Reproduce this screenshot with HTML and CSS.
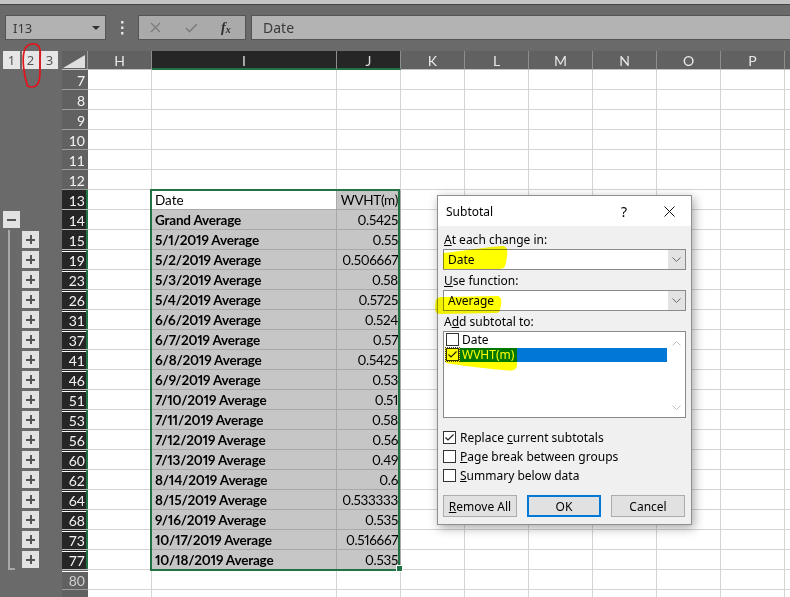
FILE: index.html
```html
<!DOCTYPE html>
<html lang="en">
<head>
<meta charset="utf-8">
<title>Subtotal</title>
<link rel="stylesheet" href="styles.css">
</head>
<body>
<div class="top"></div>
<div class="fbar">
  <div class="namebox"><span>I13</span><span class="caret"></span></div>
  <div class="dots"><svg width="3" height="14" viewBox="0 0 3 14"><rect x="0" y="0" width="2.5" height="2.5" fill="#e2e2e2"/><rect x="0" y="5.5" width="2.5" height="2.5" fill="#e2e2e2"/><rect x="0" y="11" width="2.5" height="2.5" fill="#e2e2e2"/></svg></div>
  <div class="fxbox">
    <svg class="ic-x" width="11" height="11" viewBox="0 0 11 11"><path d="M1 1L10 10M10 1L1 10" stroke="#7d7d7d" stroke-width="1.4"/></svg>
    <svg class="ic-ok" width="13" height="10" viewBox="0 0 13 10"><path d="M1 5L4.5 8.5L12 1" stroke="#7d7d7d" stroke-width="1.6" fill="none"/></svg>
    <span class="fx"><i>f</i><sub>x</sub></span>
  </div>
  <div class="input">Date</div>
</div>

<div class="hdr">
  <div class="lvl"><span class="lb">1</span><span class="lb">2</span><span class="lb">3</span></div>
  <div class="corner"><svg width="25" height="18" viewBox="0 0 25 18"><polygon points="1,17 23,17 23,4" fill="#dedede"/></svg></div>
  <div class="ch">H</div>
  <div class="ch on">I</div>
  <div class="ch on">J</div>
  <div class="ch">K</div>
  <div class="ch">L</div>
  <div class="ch">M</div>
  <div class="ch">N</div>
  <div class="ch">O</div>
  <div class="ch">P</div>
  <div class="ch end"></div>
</div>

<div class="grid">
  <div class="row"><div class="ol"></div><div class="rh">7</div><div class="c"></div><div class="c"></div><div class="c"></div><div class="c rest"></div></div>
  <div class="row"><div class="ol"></div><div class="rh">8</div><div class="c"></div><div class="c"></div><div class="c"></div><div class="c rest"></div></div>
  <div class="row"><div class="ol"></div><div class="rh">9</div><div class="c"></div><div class="c"></div><div class="c"></div><div class="c rest"></div></div>
  <div class="row"><div class="ol"></div><div class="rh">10</div><div class="c"></div><div class="c"></div><div class="c"></div><div class="c rest"></div></div>
  <div class="row"><div class="ol"></div><div class="rh">11</div><div class="c"></div><div class="c"></div><div class="c"></div><div class="c rest"></div></div>
  <div class="row"><div class="ol"></div><div class="rh">12</div><div class="c"></div><div class="c"></div><div class="c"></div><div class="c rest"></div></div>
  <div class="row"><div class="ol"></div><div class="rh sel">13</div><div class="c"></div><div class="c act">Date</div><div class="c s n">WVHT(m)</div><div class="c rest"></div></div>
  <div class="row"><div class="ol"><i class="ob minus"></i></div><div class="rh sel">14</div><div class="c"></div><div class="c s b">Grand Average</div><div class="c s n">0.5425</div><div class="c rest"></div></div>
  <div class="row"><div class="ol ln"><i class="ob plus"></i></div><div class="rh sel">15</div><div class="c"></div><div class="c s b">5/1/2019 Average</div><div class="c s n">0.55</div><div class="c rest"></div></div>
  <div class="row"><div class="ol ln"><i class="ob plus"></i></div><div class="rh sel gap">19</div><div class="c"></div><div class="c s b">5/2/2019 Average</div><div class="c s n">0.506667</div><div class="c rest"></div></div>
  <div class="row"><div class="ol ln"><i class="ob plus"></i></div><div class="rh sel gap">23</div><div class="c"></div><div class="c s b">5/3/2019 Average</div><div class="c s n">0.58</div><div class="c rest"></div></div>
  <div class="row"><div class="ol ln"><i class="ob plus"></i></div><div class="rh sel gap">26</div><div class="c"></div><div class="c s b">5/4/2019 Average</div><div class="c s n">0.5725</div><div class="c rest"></div></div>
  <div class="row"><div class="ol ln"><i class="ob plus"></i></div><div class="rh sel gap">31</div><div class="c"></div><div class="c s b">6/6/2019 Average</div><div class="c s n">0.524</div><div class="c rest"></div></div>
  <div class="row"><div class="ol ln"><i class="ob plus"></i></div><div class="rh sel gap">37</div><div class="c"></div><div class="c s b">6/7/2019 Average</div><div class="c s n">0.57</div><div class="c rest"></div></div>
  <div class="row"><div class="ol ln"><i class="ob plus"></i></div><div class="rh sel gap">41</div><div class="c"></div><div class="c s b">6/8/2019 Average</div><div class="c s n">0.5425</div><div class="c rest"></div></div>
  <div class="row"><div class="ol ln"><i class="ob plus"></i></div><div class="rh sel gap">46</div><div class="c"></div><div class="c s b">6/9/2019 Average</div><div class="c s n">0.53</div><div class="c rest"></div></div>
  <div class="row"><div class="ol ln"><i class="ob plus"></i></div><div class="rh sel gap">51</div><div class="c"></div><div class="c s b">7/10/2019 Average</div><div class="c s n">0.51</div><div class="c rest"></div></div>
  <div class="row"><div class="ol ln"><i class="ob plus"></i></div><div class="rh sel gap">53</div><div class="c"></div><div class="c s b">7/11/2019 Average</div><div class="c s n">0.58</div><div class="c rest"></div></div>
  <div class="row"><div class="ol ln"><i class="ob plus"></i></div><div class="rh sel gap">56</div><div class="c"></div><div class="c s b">7/12/2019 Average</div><div class="c s n">0.56</div><div class="c rest"></div></div>
  <div class="row"><div class="ol ln"><i class="ob plus"></i></div><div class="rh sel gap">60</div><div class="c"></div><div class="c s b">7/13/2019 Average</div><div class="c s n">0.49</div><div class="c rest"></div></div>
  <div class="row"><div class="ol ln"><i class="ob plus"></i></div><div class="rh sel gap">62</div><div class="c"></div><div class="c s b">8/14/2019 Average</div><div class="c s n">0.6</div><div class="c rest"></div></div>
  <div class="row"><div class="ol ln"><i class="ob plus"></i></div><div class="rh sel gap">64</div><div class="c"></div><div class="c s b">8/15/2019 Average</div><div class="c s n">0.533333</div><div class="c rest"></div></div>
  <div class="row"><div class="ol ln"><i class="ob plus"></i></div><div class="rh sel gap">68</div><div class="c"></div><div class="c s b">9/16/2019 Average</div><div class="c s n">0.535</div><div class="c rest"></div></div>
  <div class="row"><div class="ol ln"><i class="ob plus"></i></div><div class="rh sel gap">73</div><div class="c"></div><div class="c s b">10/17/2019 Average</div><div class="c s n">0.516667</div><div class="c rest"></div></div>
  <div class="row"><div class="ol ln last"><i class="ob plus"></i></div><div class="rh sel gap">77</div><div class="c"></div><div class="c s b">10/18/2019 Average</div><div class="c s n">0.535</div><div class="c rest"></div></div>
  <div class="row"><div class="ol"></div><div class="rh dim gap">80</div><div class="c"></div><div class="c"></div><div class="c"></div><div class="c rest"></div></div>
  <div class="row"><div class="ol"></div><div class="rh"></div><div class="c"></div><div class="c"></div><div class="c"></div><div class="c rest"></div></div>
</div>

<div class="selbox"><span class="handle"></span></div>

<div class="dlg">
  <div class="dtitle">
    <span class="tt">Subtotal</span>
    <span class="q">?</span>
    <svg class="xb" width="11" height="11" viewBox="0 0 11 11"><path d="M0.5 0.5L10.5 10.5M10.5 0.5L0.5 10.5" stroke="#111" stroke-width="1"/></svg>
  </div>
  <div class="dbody">
    <div class="lbl"><u>A</u>t each change in:</div>
    <div class="dsel"><span class="dv">Date</span><span class="dd"><svg width="9" height="5" viewBox="0 0 9 5"><path d="M0.5 0.5L4.5 4.5L8.5 0.5" stroke="#666" fill="none"/></svg></span></div>
    <div class="lbl gapt"><u>U</u>se function:</div>
    <div class="dsel"><span class="dv">Average</span><span class="dd"><svg width="9" height="5" viewBox="0 0 9 5"><path d="M0.5 0.5L4.5 4.5L8.5 0.5" stroke="#666" fill="none"/></svg></span></div>
    <div class="lbl gapt">A<u>d</u>d subtotal to:</div>
    <div class="list">
      <div class="items">
        <div class="it"><span class="cb"></span><span class="itx">Date</span></div>
        <div class="it on"><span class="cb focus"><svg width="11" height="11" viewBox="0 0 11 11"><path d="M1.5 5.5L4 8L9.5 2.5" stroke="#222" stroke-width="1.2" fill="none"/></svg></span><span class="itx">WVHT(m)</span></div>
      </div>
      <div class="sb">
        <svg width="9" height="5" viewBox="0 0 9 5"><path d="M0.5 4.5L4.5 0.5L8.5 4.5" stroke="#c0c0c0" fill="none"/></svg>
        <svg width="9" height="5" viewBox="0 0 9 5"><path d="M0.5 0.5L4.5 4.5L8.5 0.5" stroke="#c0c0c0" fill="none"/></svg>
      </div>
    </div>
    <div class="checks">
      <div class="ck"><span class="cb"><svg width="11" height="11" viewBox="0 0 11 11"><path d="M1.5 5.5L4 8L9.5 2.5" stroke="#222" stroke-width="1.2" fill="none"/></svg></span><span>Replace <u>c</u>urrent subtotals</span></div>
      <div class="ck"><span class="cb"></span><span><u>P</u>age break between groups</span></div>
      <div class="ck"><span class="cb"></span><span><u>S</u>ummary below data</span></div>
    </div>
    <div class="btns">
      <div class="btn"><u>R</u>emove All</div>
      <div class="btn def">OK</div>
      <div class="btn">Cancel</div>
    </div>
  </div>
</div>

<svg class="hl" width="790" height="597" viewBox="0 0 790 597">
  <path d="M443 253 C470 250 490 247 502 246 C507 246 508 250 507 256 L506 263 C505 268 503 269 498 269 L443 269 Z" fill="#ffff00"/>
  <path d="M436 300 C437 297 440 297 445 297 L497 296 C501 296 502 300 501 305 L500 310 C499 313 497 313 494 313 L440 314 C436 314 435 311 435 306 Z" fill="#ffff00"/>
  <path d="M445 348 L517 348 L517 365 C517 369 514 371 508 370.5 C490 369 465 366 452 364 C447 363.5 445 363 445 360 Z" fill="#ffff00"/>
</svg>
<svg class="ann" width="60" height="95" viewBox="0 0 60 95">
  <path d="M27 84 C24 75 22 60 24 52 C25 46 30 43 35 44 C40 45 41 50 40 58 L40 72 C40 82 38 87 32 87 C29 87 27 86 27 84" stroke="#e3141a" stroke-width="1.7" fill="none" stroke-linecap="round"/>
</svg>
</body>
</html>
```

FILE: styles.css
```css
* { box-sizing: border-box; margin: 0; padding: 0; }
html, body { width: 790px; height: 597px; overflow: hidden; }
body { background: #6a6a6a; font-family: "Lato", "Liberation Sans", sans-serif; position: relative; }

.top { height: 5px; background: #c6c4c2; border-bottom: 1px solid #454545; }

.fbar { height: 46px; display: flex; align-items: flex-start; padding: 10px 0 0 5px; }
.namebox { width: 101px; height: 25px; background: #b2b2b2; border: 1px solid #555; display: flex; align-items: center; justify-content: space-between; padding: 0 5px 0 7px; font: 13px "Noto Sans", sans-serif; color: #3a3a3a; }
.caret { width: 0; height: 0; border-left: 4px solid transparent; border-right: 4px solid transparent; border-top: 4px solid #333; }
.dots { width: 32px; height: 25px; display: flex; align-items: center; justify-content: center; }
.fxbox { width: 108px; height: 25px; background: #aaaaaa; border: 1px solid #555; display: flex; align-items: center; padding-left: 11px; }
.ic-ok { margin-left: 24px; }
.fx { margin-left: 23px; font: bold italic 14px "Liberation Serif", serif; color: #2e2e2e; }
.fx i { font-style: italic; }
.fx sub { font-size: 10px; vertical-align: -1px; }
.input { flex: 1; height: 25px; margin-left: 5px; background: #b3b3b3; border: 1px solid #555; border-right: none; font: 14px "Noto Sans", sans-serif; color: #3a3a3a; padding-left: 11px; display: flex; align-items: center; }

.hdr { display: grid; grid-template-columns: 62px 26px 64px 185px repeat(7, 64px) 1fr; height: 19px; }
.lvl { display: flex; gap: 2px; padding-left: 3px; }
.lb { width: 17px; height: 18px; background: #e6e6e6; color: #555; font: 13px "Noto Sans", sans-serif; display: flex; align-items: center; justify-content: center; }
.corner { background: #616161; border-right: 1px solid #999; border-bottom: 1px solid #c4c4c4; }
.corner svg { display: block; }
.ch { background: #616161; color: #e8e8e8; font-size: 14px; line-height: 19px; text-align: center; border-right: 1px solid #8e8e8e; border-bottom: 1px solid #c4c4c4; overflow: hidden; }
.ch.on { background: #262626; color: #dcdcdc; border-bottom: 2px solid #217346; }
.ch.end { border-right: none; }

.row { display: grid; grid-template-columns: 62px 26px 64px 185px 64px 1fr; height: 20px; }
.ol { display: flex; align-items: flex-start; }
.ol.ln { background: linear-gradient(#a8a8a8, #a8a8a8) 8px 0 / 2px 100% no-repeat; }
.ol.ln.last { background: linear-gradient(#a8a8a8, #a8a8a8) 8px 0 / 2px 20px no-repeat, linear-gradient(#a8a8a8, #a8a8a8) 8px 18px / 7px 2px no-repeat; }
.ob { display: block; width: 17px; height: 17px; margin-top: 1px; background-color: #e2e2e2; }
.ob.minus { margin-left: 3px; background: linear-gradient(#555, #555) center / 9px 2px no-repeat, #e2e2e2; }
.ob.plus { margin-left: 22px; background: linear-gradient(#555, #555) center / 9px 2px no-repeat, linear-gradient(#555, #555) center / 2px 9px no-repeat, #e2e2e2; }

.rh { height: 20px; background: #616161; color: #f2f2f2; font-size: 14px; line-height: 21px; text-align: right; padding-right: 3px; border-bottom: 1px solid #9c9c9c; overflow: hidden; }
.rh.sel { background-color: #262626; box-shadow: inset -2px 0 0 #217346; border-bottom-color: #bdbdbd; }
.rh.gap { background-image: linear-gradient(to bottom, transparent 0 1px, #ffffff 1px 2px, transparent 2px); }
.rh.dim { color: #cfcfcf; border-bottom-color: #9c9c9c; }

.c { height: 20px; background: #fff; border-right: 1px solid #d4d4d4; border-bottom: 1px solid #d4d4d4; font-size: 13.5px; line-height: 21px; padding: 0 3px; white-space: nowrap; overflow: hidden; color: #000; font-variant-numeric: proportional-nums; }
.c.s { background: #c6c6c6; border-color: #a9a9a9; }
.c.act { background: #fff; border-right-color: #a9a9a9; border-bottom-color: #a9a9a9; }
.c.b { font-weight: bold; letter-spacing: -0.2px; }
.c.n { text-align: right; padding-right: 2px; letter-spacing: -0.3px; }
.c.rest { border-right: none; background: repeating-linear-gradient(to right, #fff 0 63px, #d4d4d4 63px 64px); }

.selbox { position: absolute; left: 150px; top: 189px; width: 250px; height: 382px; border: 2px solid #217346; pointer-events: none; }
.handle { position: absolute; right: -5px; bottom: -3px; width: 7px; height: 7px; background: #217346; border: 1px solid #fff; }

.dlg { position: absolute; left: 437px; top: 195px; width: 255px; height: 330px; background: #f0f0f0; border: 1px solid #8f8f8f; box-shadow: 2px 3px 10px rgba(0, 0, 0, 0.35); font: 12px "Noto Sans", sans-serif; color: #000; }
.dtitle { height: 30px; background: #fff; display: flex; align-items: center; padding-left: 8px; }
.tt { flex: 1; }
.q { font-size: 14px; margin-right: 37px; }
.xb { margin-right: 16px; }
.dbody { padding: 5px 5px 0; }
.lbl { height: 18px; line-height: 18px; padding-left: 1px; }
.lbl.gapt { margin-top: 2px; }
.dsel { height: 21px; background: #fff; border: 1px solid #8a8a8a; display: flex; }
.dv { flex: 1; padding-left: 4px; line-height: 19px; }
.dd { width: 17px; background: #e3e3e3; display: flex; align-items: center; justify-content: center; }
.list { height: 87px; background: #fff; border: 1px solid #8a8a8a; display: flex; }
.items { flex: 1; }
.it { height: 15px; display: flex; align-items: center; padding-left: 2px; }
.it .cb { margin-right: 1px; }
.itx { flex: 1; height: 14px; line-height: 14px; padding-left: 2px; }
.it.on .itx { background: #0078d7; color: #fff; }
.cb { width: 13px; height: 13px; border: 1px solid #333; background: #fff; flex: none; display: flex; align-items: center; justify-content: center; }
.cb.focus { outline: 1px dotted #444; outline-offset: 0; }
.sb { width: 18px; display: flex; flex-direction: column; align-items: center; justify-content: space-between; padding: 9px 0 7px; }
.checks { margin-top: 10px; }
.ck { height: 19px; display: flex; align-items: center; gap: 4px; }
.btns { margin-top: 10px; display: flex; gap: 10px; }
.btn { width: 74px; height: 22px; background: #e1e1e1; border: 1px solid #adadad; display: flex; align-items: center; justify-content: center; }
.btn.def { border: 2px solid #0078d7; }

.hl { position: absolute; left: 0; top: 0; mix-blend-mode: multiply; pointer-events: none; }
.ann { position: absolute; left: 0; top: 0; pointer-events: none; }
```
